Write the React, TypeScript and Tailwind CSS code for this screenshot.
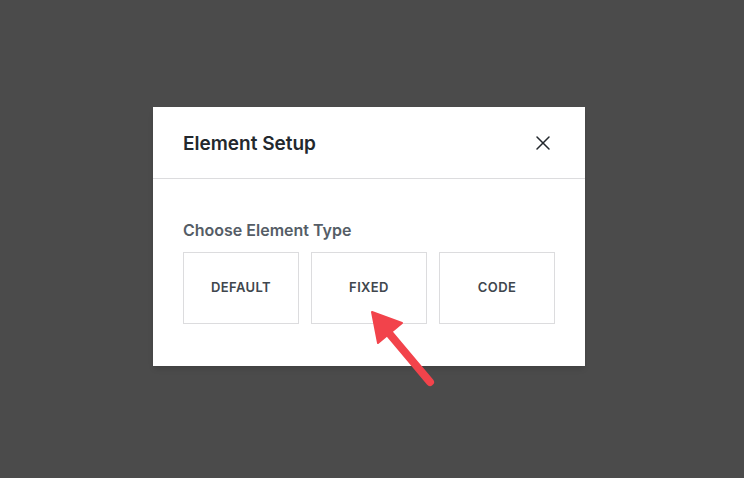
import { X } from 'lucide-react';

const types = ['Default', 'Fixed', 'Code'];

const App = () => {
  return (
    <div className="relative w-[744px] h-[478px] bg-[#4b4b4b] overflow-hidden" style={{ fontFamily: 'Inter, "Liberation Sans", sans-serif' }}>
      <div className="absolute left-[153px] top-[107px] w-[432px] bg-white shadow-md">
        {/* Header */}
        <div className="h-[72px] flex items-center justify-between pl-[30px] pr-[30px] border-b border-[#dcdcde]">
          <h2 className="mt-[3px] text-[19px] font-semibold text-[#23282d]">Element Setup</h2>
          <button className="text-[#23282d]" aria-label="Close">
            <X size={24} strokeWidth={1.5} />
          </button>
        </div>

        {/* Body */}
        <div className="px-[30px] pt-[41px] pb-[42px]">
          <p className="text-[16px] font-semibold text-[#555d66] leading-5 mb-[12px]">Choose Element Type</p>
          <div className="grid grid-cols-3 gap-[12px]">
            {types.map((t) => (
              <button key={t} className="h-[72px] border border-[#dcdcde] bg-white flex items-center justify-center text-[13px] font-semibold uppercase tracking-[0.03em] text-[#40464d]">
                {t}
              </button>
            ))}
          </div>
        </div>
      </div>

      {/* Annotation arrow */}
      <svg className="absolute left-0 top-0 pointer-events-none" width="744" height="478">
        <line x1="430" y1="382" x2="388" y2="332" stroke="#f2434b" strokeWidth="8" strokeLinecap="round" />
        <polygon points="372,312 402,323 378,343" fill="#f2434b" stroke="#f2434b" strokeWidth="2" strokeLinejoin="round" />
      </svg>
    </div>
  );
};

export default App;
